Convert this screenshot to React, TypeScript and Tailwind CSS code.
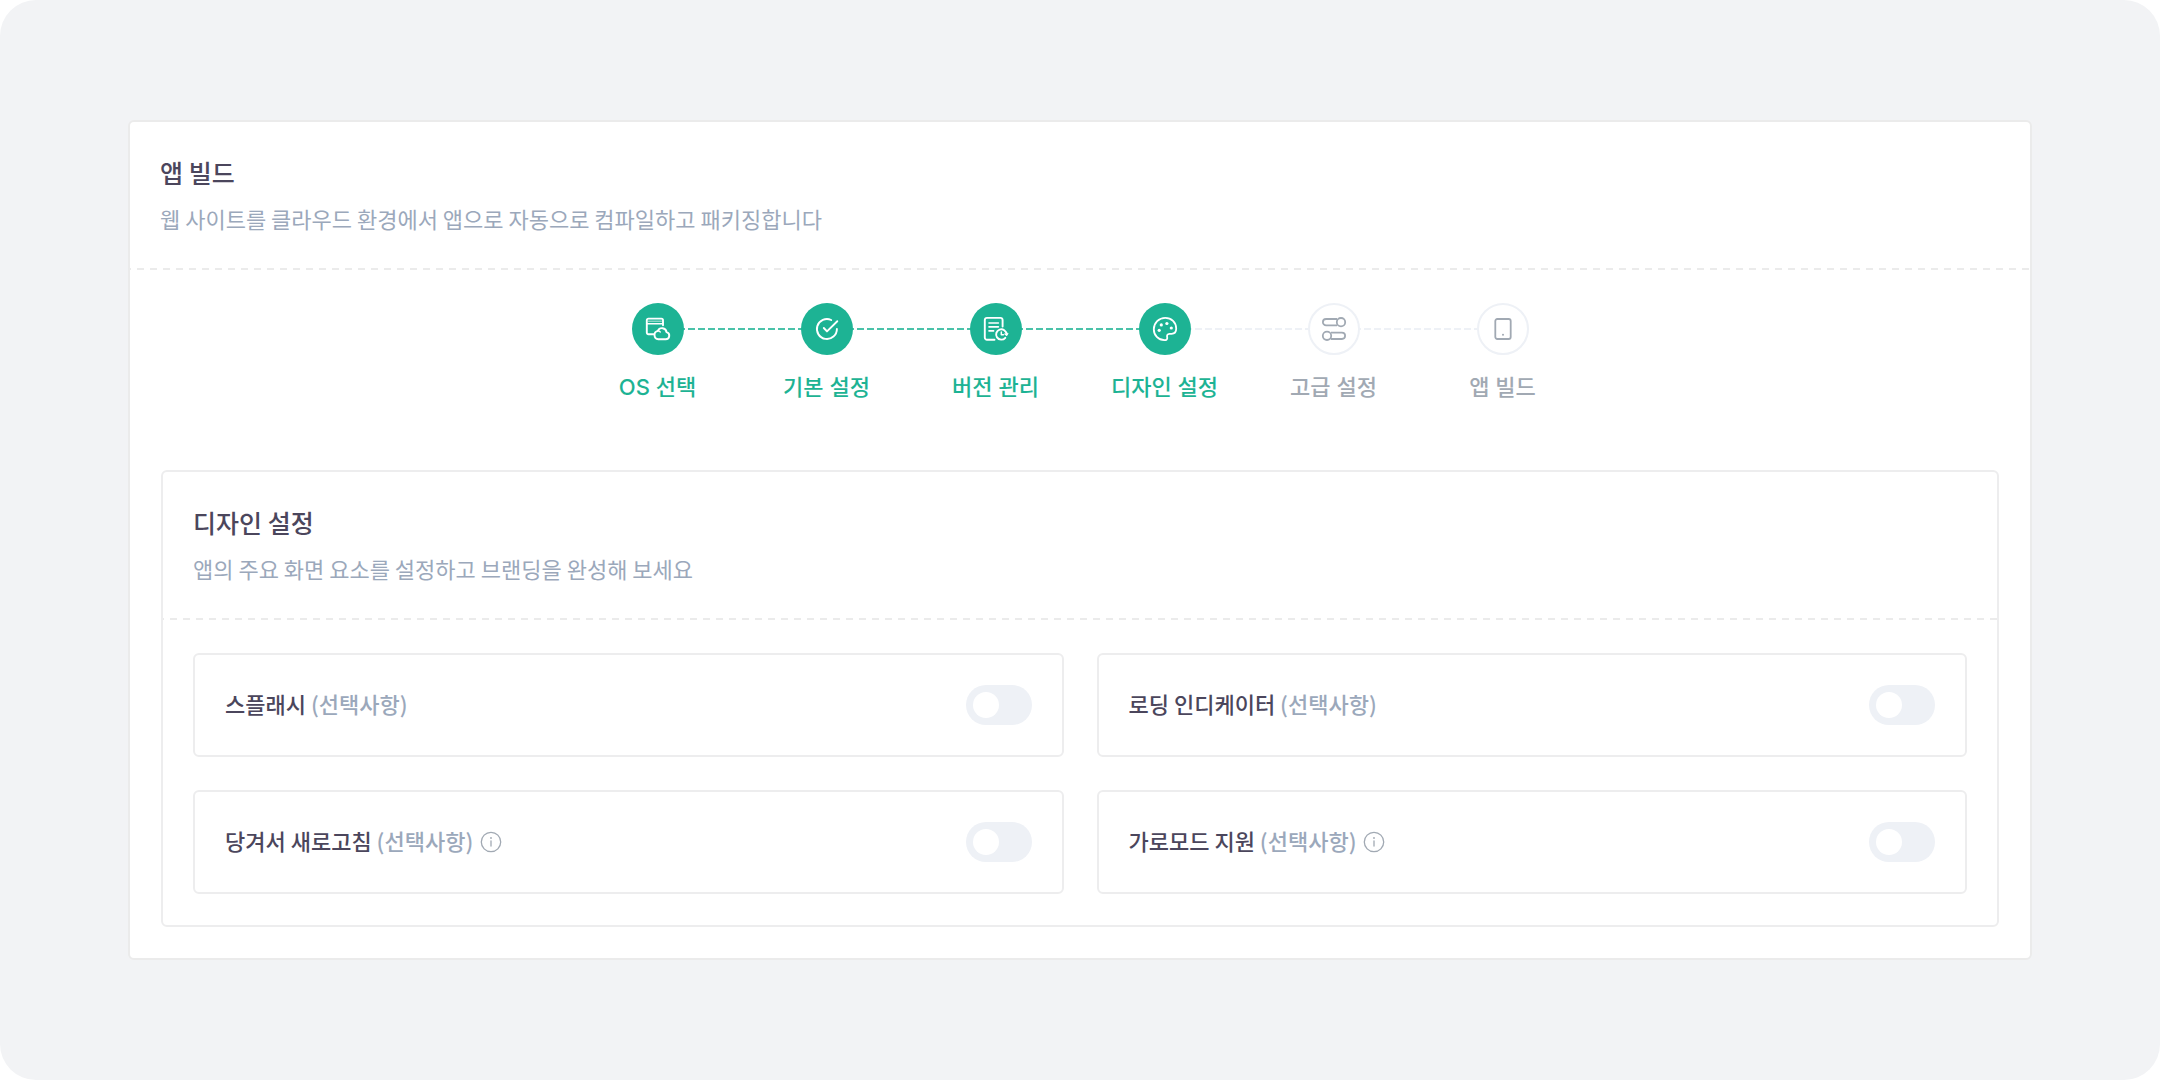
import type { ReactNode } from "react";

type Step = { label: string; done: boolean; icon: ReactNode };

function WindowCloudIcon() {
  return (
    <svg viewBox="0 0 24 24" className="size-6 overflow-visible" fill="none" stroke="currentColor" strokeWidth="1.9" strokeLinecap="round" strokeLinejoin="round" aria-hidden="true">
      <path d="M7.6 17.2H2.4a1.6 1.6 0 0 1-1.6-1.6V3.2a1.6 1.6 0 0 1 1.6-1.6h13a1.6 1.6 0 0 1 1.6 1.6v5" />
      <path d="M1.200 6.800h15.400" strokeWidth="1.500" />
      <path d="M2.400 4.200h13" strokeWidth="1" opacity=".7" />
      <path d="M12.300 22.200h7.300a3.600 3.600 0 0 0 .9-7.100 4.500 4.500 0 0 0-8.600-1.200 4.200 4.200 0 0 0 .4 8.300Z" />
      <path d="M11.400 13.900c1.200-.1 2.200.3 2.900 1.100" strokeWidth="1.300" />
    </svg>
  );
}

function CheckCircleIcon() {
  return (
    <svg viewBox="0 0 24 24" className="size-6 overflow-visible" fill="none" stroke="currentColor" strokeWidth="1.900" strokeLinecap="round" strokeLinejoin="round" aria-hidden="true">
      <path d="M16.200 3A10 10 0 1 0 21.900 12" />
      <path d="m8.800 11 3.200 3.400L22.300 4.200" />
    </svg>
  );
}

function DocumentClockIcon() {
  return (
    <svg viewBox="0 0 24 24" className="size-6 overflow-visible" fill="none" stroke="currentColor" strokeWidth="1.900" strokeLinecap="round" strokeLinejoin="round" aria-hidden="true">
      <path d="M10.500 22.700H3a2.200 2.200 0 0 1-2.200-2.200V3A2.200 2.200 0 0 1 3 .9h13.400A2.200 2.200 0 0 1 18.600 3v6.600" />
      <path d="M5 6h9.400M5 9.900h9.400M5 13.900h4.600" strokeWidth="1.600" />
      <path d="M22.500 17.200a5.200 5.200 0 1 0-1.200 3.600" />
      <path d="M17.300 14.900v2.800h2.100" strokeWidth="1.500" />
      <path d="m20.900 17 1.700 1.300 1.200-1.800" strokeWidth="1.300" />
    </svg>
  );
}

function PaletteIcon() {
  return (
    <svg viewBox="0 0 24 24" className="size-6 overflow-visible" fill="none" stroke="currentColor" strokeWidth="1.800" strokeLinecap="round" strokeLinejoin="round" aria-hidden="true">
      <path d="M12.300.8C5.900.8.800 5.900.800 12.200c0 5.900 4.500 10.800 10.600 11 2.300 0 3.200-1.400 2.800-2.900-.5-1.800.1-3.500 2.200-3.500h2.200c3 0 4.600-2.400 4.600-5.300C23.200 5.400 18.400.8 12.300.8Z" />
      <g fill="currentColor" stroke="none">
        <circle cx="6.200" cy="13.300" r="1.600" />
        <circle cx="8.300" cy="7.900" r="1.600" />
        <circle cx="13.900" cy="6.500" r="1.600" />
        <circle cx="18.300" cy="11" r="1.600" />
      </g>
    </svg>
  );
}

function SlidersIcon() {
  return (
    <svg viewBox="0 0 24 24" className="size-6 overflow-visible" fill="none" stroke="currentColor" strokeWidth="1.800" aria-hidden="true">
      <path d="M15 8.400H4.100a3.200 3.200 0 0 1 0-6.400H15" />
      <circle cx="19" cy="5.200" r="4.200" />
      <path d="M9 15.600h10.900a3.200 3.200 0 0 1 0 6.400H9" />
      <circle cx="5" cy="18.800" r="4.200" />
    </svg>
  );
}

function DeviceIcon() {
  return (
    <svg viewBox="0 0 24 24" className="size-6 overflow-visible" fill="none" stroke="currentColor" strokeWidth="1.800" aria-hidden="true">
      <rect x="4.300" y="2" width="15.400" height="20" rx="2" />
      <circle cx="12" cy="17.700" r="1" fill="currentColor" stroke="none" />
    </svg>
  );
}

function InfoIcon() {
  return (
    <svg viewBox="0 0 24 24" className="size-6" fill="none" stroke="currentColor" strokeWidth="1.300" strokeLinecap="round" aria-hidden="true">
      <circle cx="12" cy="12" r="9.700" />
      <path d="M12 11v5" />
      <circle cx="12" cy="8" r=".9" fill="currentColor" stroke="none" />
    </svg>
  );
}

const steps: Step[] = [
  { label: "OS 선택", done: true, icon: <WindowCloudIcon /> },
  { label: "기본 설정", done: true, icon: <CheckCircleIcon /> },
  { label: "버전 관리", done: true, icon: <DocumentClockIcon /> },
  { label: "디자인 설정", done: true, icon: <PaletteIcon /> },
  { label: "고급 설정", done: false, icon: <SlidersIcon /> },
  { label: "앱 빌드", done: false, icon: <DeviceIcon /> },
];

const options = [
  { id: "splash", label: "스플래시", info: false },
  { id: "loading", label: "로딩 인디케이터", info: false },
  { id: "refresh", label: "당겨서 새로고침", info: true },
  { id: "landscape", label: "가로모드 지원", info: true },
];

function PanelHeader({ title, text, level }: { title: string; text: string; level: 1 | 2 }) {
  const Heading = level === 1 ? "h1" : "h2";
  return (
    <header>
      <div className="flex flex-col gap-3 px-[30px] pt-8 pb-[34px]">
        <Heading className="text-[25px] leading-9 font-medium text-[#4b465c]">{title}</Heading>
        <p className="text-[22px] leading-8 text-[#9ba8bb]">{text}</p>
      </div>
      <svg className="block w-full text-[#ebebeb]" height="2" aria-hidden="true">
        <line x1="0" y1="1" x2="100%" y2="1" stroke="currentColor" strokeWidth="2" strokeDasharray="7 6" strokeDashoffset="6" />
      </svg>
    </header>
  );
}

function Connector({ done }: { done: boolean }) {
  return (
    <svg
      className={
        done
          ? "absolute top-[25px] left-1/2 w-full text-[#1db394] opacity-80"
          : "absolute top-[25px] left-1/2 w-full text-[#eef1f6]"
      }
      height="2"
      aria-hidden="true"
    >
      <line x1="0" y1="1" x2="100%" y2="1" stroke="currentColor" strokeWidth="2" strokeDasharray="7 3" />
    </svg>
  );
}

function StepItem({ step, last, nextDone }: { step: Step; last: boolean; nextDone: boolean }) {
  return (
    <li className="relative flex w-[169px] flex-col items-center gap-4">
      {!last && <Connector done={nextDone} />}
      <span
        className={
          step.done
            ? "relative flex size-[52px] items-center justify-center rounded-full bg-[#1db394] text-white"
            : "relative flex size-[52px] items-center justify-center rounded-full border-2 border-[#eef1f6] bg-white text-[#a1a9b3]"
        }
      >
        {step.icon}
      </span>
      <span
        className={
          step.done
            ? "font-['Inter','Noto_Sans_CJK_KR',sans-serif] text-[22px] leading-8 font-medium whitespace-nowrap text-[#1db394]"
            : "font-['Inter','Noto_Sans_CJK_KR',sans-serif] text-[22px] leading-8 font-medium whitespace-nowrap text-[#a1a9b3]"
        }
      >
        {step.label}
      </span>
    </li>
  );
}

function OptionCard({ id, label, info }: { id: string; label: string; info: boolean }) {
  return (
    <div className="flex items-center justify-between rounded-md border-2 border-[#ededee] p-[30px]">
      <div className="flex items-center gap-1.5">
        <label htmlFor={id} className="pb-1 text-[22px] leading-8 font-medium text-[#4b465c]">
          {label} <span className="text-[#9ba8bb]">(선택사항)</span>
        </label>
        {info && (
          <button type="button" aria-label={label + " 안내"} className="text-[#a1a9b3]">
            <InfoIcon />
          </button>
        )}
      </div>
      <input
        id={id}
        type="checkbox"
        role="switch"
        className="h-10 w-[66px] cursor-pointer appearance-none rounded-full bg-[#eef1f6] before:mt-[7px] before:ml-[7px] before:block before:size-[26px] before:rounded-full before:bg-white before:content-[''] checked:bg-[#1db394] checked:before:ml-8"
      />
    </div>
  );
}

export default function App() {
  return (
    <div className="bg-white font-['Noto_Sans_CJK_KR',sans-serif]">
      <main className="flex min-h-screen flex-col justify-center rounded-[36px] bg-[#f2f3f5] px-32">
        <section className="rounded-md border-2 border-[#ebebeb] bg-white">
          <PanelHeader level={1} title="앱 빌드" text="웹 사이트를 클라우드 환경에서 앱으로 자동으로 컴파일하고 패키징합니다" />
          <ol className="flex justify-center pt-[33px]">
            {steps.map((step, i) => (
              <StepItem key={step.label} step={step} last={i === steps.length - 1} nextDone={steps[i + 1]?.done ?? false} />
            ))}
          </ol>
          <div className="px-[31px] pt-[67px] pb-[31px]">
            <section className="rounded-md border-2 border-[#ededee]">
              <PanelHeader level={2} title="디자인 설정" text="앱의 주요 화면 요소를 설정하고 브랜딩을 완성해 보세요" />
              <div className="grid grid-cols-2 gap-[33px] px-[30px] pt-[33px] pb-[31px]">
                {options.map((o) => (
                  <OptionCard key={o.id} {...o} />
                ))}
              </div>
            </section>
          </div>
        </section>
      </main>
    </div>
  );
}
